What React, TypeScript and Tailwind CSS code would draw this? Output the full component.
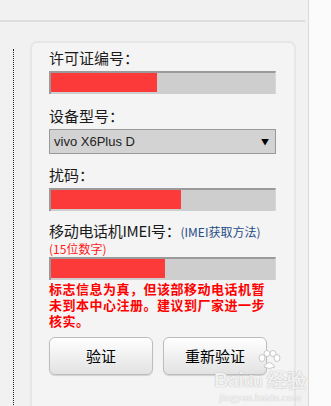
const FONT = { fontFamily: '"Microsoft YaHei", "Noto Sans CJK SC", "Noto Sans", sans-serif' }

function Field({ red }: { red: string }) {
  return (
    <div className="h-[23px] w-[227px] bg-[#cecece] border-t-2 border-l-2 border-[#9a9a9a] border-r border-r-[#d8d8d8]">
      <div className={`h-[19px] bg-[#fd3a3a] ${red}`} />
    </div>
  )
}

function Btn({ label }: { label: string }) {
  return (
    <button className="h-[38px] w-[104px] rounded-[6px] border border-[#bdbdbd] bg-gradient-to-b from-[#ffffff] to-[#e2e2e2] shadow-[0_1px_1px_rgba(0,0,0,0.15)] text-[15px] text-black">
      {label}
    </button>
  )
}

export default function App() {
  return (
    <div className="relative w-[331px] h-[406px] overflow-hidden flex bg-[#f1f1f1] text-[#222]" style={FONT}>
      <div className="w-[309px] border-r border-[#dadada] flex flex-col">
        <div className="h-[22px] border-b-2 border-[#dedede] mr-[3px]" />
        <div className="flex flex-1">
          <div className="w-[13px] shrink-0" />
          <div className="mt-[27px] border-l border-dotted border-[#222] h-full" />
          <div className="ml-[16px] mt-[19px] w-[266px] rounded-t-[7px] border-2 border-b-0 border-[#e6e6e6] bg-[#f4f4f4] pl-[17px] pt-[6px]">
            <div className="text-[15px] leading-[18px] text-[#1a1a1a]">许可证编号：</div>
            <div className="mt-[4px]"><Field red="w-[106px]" /></div>

            <div className="mt-[13px] text-[15px] leading-[18px] text-[#1a1a1a]">设备型号：</div>
            <div className="mt-[4px] h-[25px] w-[227px] bg-[#d3d3d3] border border-[#999] flex items-center justify-between pl-[4px] pr-[6px]">
              <span className="text-[13px]" style={{ fontFamily: '"Liberation Sans", Arial, sans-serif' }}>vivo X6Plus D</span>
              <span className="text-[8px] leading-none text-black">▼</span>
            </div>

            <div className="mt-[12px] text-[15px] leading-[18px] text-[#1a1a1a]">扰码：</div>
            <div className="mt-[4px]"><Field red="w-[130px]" /></div>

            <div className="mt-[11px] text-[15px] leading-[18px] text-[#1a1a1a] flex items-baseline whitespace-nowrap tracking-[-0.3px]">
              移动电话机IMEI号：
              <span className="text-[12px] text-[#1f4d85] tracking-normal">(IMEI获取方法)</span>
            </div>
            <div className="text-[12px] leading-[15px] text-[#ff1a1a]">(15位数字)</div>
            <div className="mt-[1px]"><Field red="w-[114px]" /></div>

            <div className="mt-[1px] w-[226px] text-[13px] leading-[16px] font-bold tracking-[0.5px] text-[#ff0000]">
              标志信息为真，但该部移动电话机暂<br />未到本中心注册。建议到厂家进一步<br />核实。
            </div>

            <div className="mt-[8px] flex gap-[10px]">
              <Btn label="验证" />
              <Btn label="重新验证" />
            </div>
          </div>
        </div>
      </div>
      <div className="flex-1 bg-[#fbfbfb]" />

      {/* watermark */}
      <div className="absolute left-[214px] top-[350px] pointer-events-none flex flex-col items-center">
        <svg width="26" height="20" viewBox="0 0 26 20" className="ml-[18px]">
          <g fill="#ffffff" stroke="#c8c8c8" strokeWidth="1">
            <ellipse cx="6" cy="8" rx="3" ry="3.5" />
            <ellipse cx="11" cy="3.5" rx="3" ry="3" />
            <ellipse cx="17" cy="3.5" rx="3" ry="3" />
            <ellipse cx="21" cy="8" rx="3" ry="3.5" />
            <path d="M8 17 Q13 8 19 17 Q13 20 8 17 Z" />
          </g>
        </svg>
        <div className="text-[20px] font-bold leading-none tracking-tight text-white/85" style={{ fontFamily: '"Liberation Sans", sans-serif', textShadow: '0 0 1px #999' }}>
          Bai<span className="text-[16px]">du</span> 经验
        </div>
        <div className="text-[11px] leading-none mt-[2px] text-white/85" style={{ fontFamily: '"Liberation Serif", serif', textShadow: '0 0 1px #aaa' }}>
          jingyan.baidu.com
        </div>
      </div>
    </div>
  )
}
